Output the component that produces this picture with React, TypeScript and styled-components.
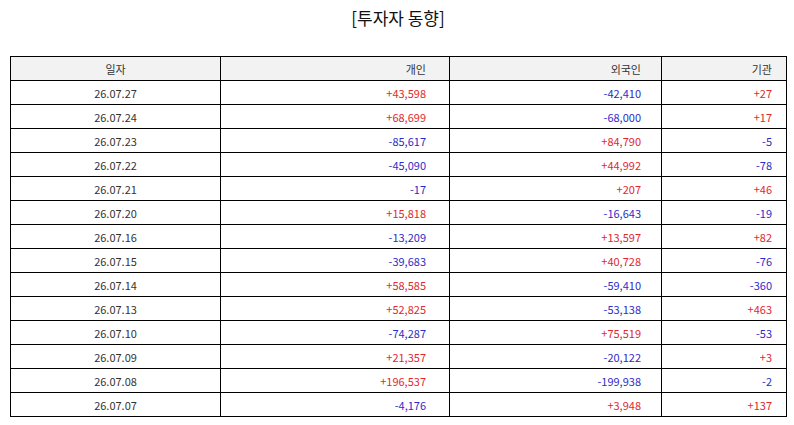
import React from 'react';
import styled, { createGlobalStyle } from 'styled-components';

type Row = {
  date: string;
  personal: number;
  foreign: number;
  institution: number;
};

const rows: Row[] = [
  { date: '26.07.27', personal: 43598, foreign: -42410, institution: 27 },
  { date: '26.07.24', personal: 68699, foreign: -68000, institution: 17 },
  { date: '26.07.23', personal: -85617, foreign: 84790, institution: -5 },
  { date: '26.07.22', personal: -45090, foreign: 44992, institution: -78 },
  { date: '26.07.21', personal: -17, foreign: 207, institution: 46 },
  { date: '26.07.20', personal: 15818, foreign: -16643, institution: -19 },
  { date: '26.07.16', personal: -13209, foreign: 13597, institution: 82 },
  { date: '26.07.15', personal: -39683, foreign: 40728, institution: -76 },
  { date: '26.07.14', personal: 58585, foreign: -59410, institution: -360 },
  { date: '26.07.13', personal: 52825, foreign: -53138, institution: 463 },
  { date: '26.07.10', personal: -74287, foreign: 75519, institution: -53 },
  { date: '26.07.09', personal: 21357, foreign: -20122, institution: 3 },
  { date: '26.07.08', personal: 196537, foreign: -199938, institution: -2 },
  { date: '26.07.07', personal: -4176, foreign: 3948, institution: 137 },
];

const GlobalStyle = createGlobalStyle`
  html, body {
    margin: 0;
    padding: 0;
    background: #ffffff;
  }
  body {
    font-family: "Noto Sans CJK KR", "Noto Sans", sans-serif;
    color: #333333;
  }
`;

const Page = styled.main`
  padding: 0 8px 0 10px;
`;

const Title = styled.h1`
  margin: 0;
  height: 36px;
  line-height: 36px;
  font-size: 17px;
  font-weight: 400;
  text-align: center;
  color: #111111;
`;

const Table = styled.table`
  margin-top: 20px;
  width: 776px;
  border-collapse: collapse;
  table-layout: fixed;
  font-size: 11px;
`;

const HeadCell = styled.th<{ $align: 'center' | 'right'; $pad: number }>`
  height: 23px;
  padding: 0 ${(p) => p.$pad}px 0 0;
  border: 1px solid #000000;
  background: #f2f2f2;
  font-weight: 400;
  text-align: ${(p) => p.$align};
  color: #333333;
`;

const Cell = styled.td<{ $align: 'center' | 'right'; $pad: number; $tone?: 'up' | 'down' }>`
  height: 23px;
  padding: 0 ${(p) => p.$pad}px 0 0;
  border: 1px solid #000000;
  text-align: ${(p) => p.$align};
  color: ${(p) => (p.$tone === 'up' ? '#e0282e' : p.$tone === 'down' ? '#2c2cc8' : '#333333')};
`;

const columns = [
  { label: '일자', width: 210, align: 'center' as const, pad: 0 },
  { label: '개인', width: 229, align: 'right' as const, pad: 23 },
  { label: '외국인', width: 212, align: 'right' as const, pad: 20 },
  { label: '기관', width: 125, align: 'right' as const, pad: 14 },
];

const fmt = (n: number) => (n > 0 ? '+' : '') + n.toLocaleString('en-US');

const ValueCell: React.FC<{ value: number; pad: number }> = ({ value, pad }) => (
  <Cell $align="right" $pad={pad} $tone={value > 0 ? 'up' : 'down'}>
    {fmt(value)}
  </Cell>
);

const App: React.FC = () => {
  return (
    <>
      <GlobalStyle />
      <Page>
        <Title>[투자자 동향]</Title>
        <Table>
          <colgroup>
            {columns.map((c) => (
              <col key={c.label} style={{ width: c.width }} />
            ))}
          </colgroup>
          <thead>
            <tr>
              {columns.map((c) => (
                <HeadCell key={c.label} $align={c.align} $pad={c.pad}>
                  {c.label}
                </HeadCell>
              ))}
            </tr>
          </thead>
          <tbody>
            {rows.map((r) => (
              <tr key={r.date}>
                <Cell $align="center" $pad={0}>
                  {r.date}
                </Cell>
                <ValueCell value={r.personal} pad={columns[1].pad} />
                <ValueCell value={r.foreign} pad={columns[2].pad} />
                <ValueCell value={r.institution} pad={columns[3].pad} />
              </tr>
            ))}
          </tbody>
        </Table>
      </Page>
    </>
  );
};

export default App;
